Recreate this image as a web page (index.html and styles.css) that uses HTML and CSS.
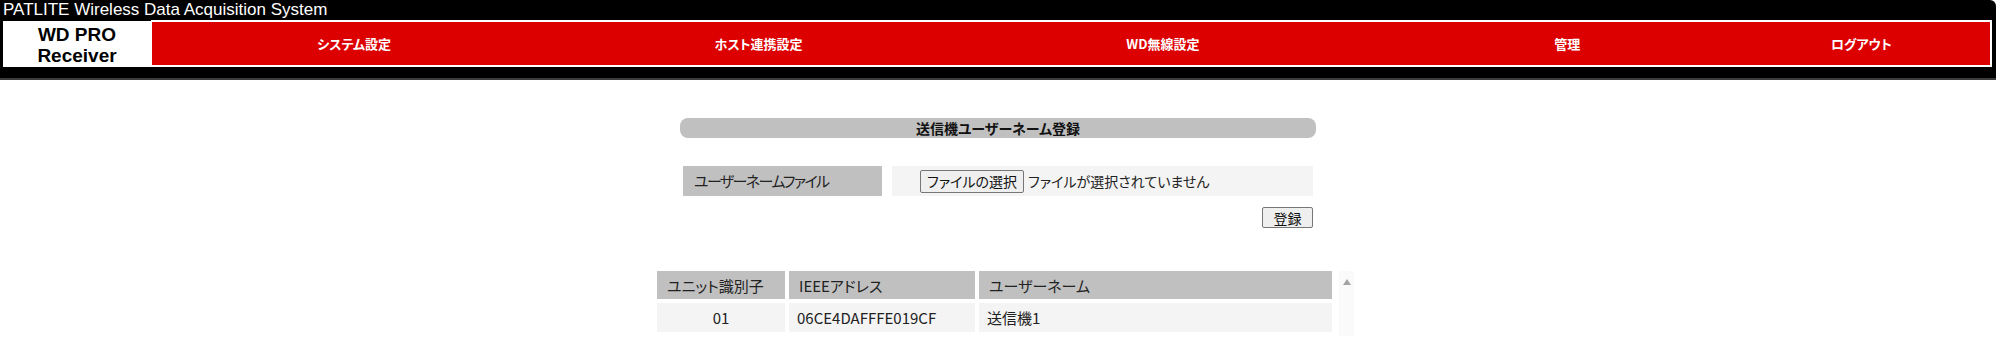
FILE: index.html
```html
<!DOCTYPE html>
<html lang="ja">
<head>
    <meta charset="UTF-8">
    <title>WD PRO Receiver</title>
    <link rel="stylesheet" href="styles.css">
</head>
<body>
    <header class="header">
        <div class="site-title">PATLITE Wireless Data Acquisition System</div>
        <div class="header-row">
            <div class="logo">WD PRO<br>Receiver</div>
            <nav class="nav">
                <a href="#">システム設定</a>
                <a href="#">ホスト連携設定</a>
                <a href="#">WD無線設定</a>
                <a href="#">管理</a>
                <a href="#">ログアウト</a>
            </nav>
        </div>
    </header>

    <main class="content">
        <div class="panel">
            <h1 class="panel-title">送信機ユーザーネーム登録</h1>

            <div class="form-row">
                <div class="form-label">ユーザーネームファイル</div>
                <div class="form-field">
                    <button type="button" class="file-button">ファイルの選択</button>
                    <span class="file-name">ファイルが選択されていません</span>
                </div>
            </div>

            <div class="form-actions">
                <button type="button" class="submit-button">登録</button>
            </div>
        </div>

        <div class="list-wrap">
            <table class="user-table">
                <colgroup>
                    <col class="col-id">
                    <col class="col-addr">
                    <col class="col-name">
                </colgroup>
                <thead>
                    <tr>
                        <th>ユニット識別子</th>
                        <th>IEEEアドレス</th>
                        <th>ユーザーネーム</th>
                    </tr>
                </thead>
                <tbody>
                    <tr>
                        <td class="cell-id">01</td>
                        <td>06CE4DAFFFE019CF</td>
                        <td>送信機1</td>
                    </tr>
                </tbody>
            </table>
            <div class="scrollbar"><span class="scroll-up"></span></div>
        </div>
    </main>
</body>
</html>
```

FILE: styles.css
```css
* {
    margin: 0;
    padding: 0;
    box-sizing: border-box;
}

body {
    font-family: "Noto Sans CJK JP", sans-serif;
    font-feature-settings: "palt";
    background: #ffffff;
    color: #222;
}

/* header */
.header {
    background: #000;
    height: 80px;
    border-bottom: 2px solid #3c3c3c;
    border-top-right-radius: 6px;
}

.site-title {
    font-family: "Liberation Sans", sans-serif;
    color: #fff;
    font-size: 17px;
    line-height: 20px;
    height: 20px;
    padding-left: 3px;
}

.header-row {
    display: flex;
    height: 47px;
    margin: 0 4px 0 3px;
}

.logo {
    width: 148px;
    margin-top: 1px;
    background: #fff;
    color: #000;
    font-family: "Liberation Sans", sans-serif;
    font-weight: 700;
    font-size: 19px;
    line-height: 21px;
    text-align: center;
    padding-top: 3px;
}

.nav {
    flex: 1;
    display: grid;
    grid-template-columns: 22% 22% 22% 22% 10%;
    align-items: center;
    background: #dd0000;
    border: 2px solid #fff;
    border-left-width: 1px;
}

.nav a {
    color: #fff;
    font-weight: 700;
    font-size: 13px;
    text-decoration: none;
    text-align: center;
}

/* register panel */
.content {
    padding-top: 38px;
}

.panel {
    width: 636px;
    margin: 0 auto;
}

.panel-title {
    background: #c0c0c0;
    border-radius: 8px;
    height: 20px;
    line-height: 20px;
    font-size: 14px;
    font-weight: 700;
    text-align: center;
    color: #111;
}

.form-row {
    display: grid;
    grid-template-columns: 199px 1fr;
    column-gap: 10px;
    margin: 28px 3px 0 3px;
    height: 30px;
}

.form-label {
    background: #c0c0c0;
    font-size: 15px;
    letter-spacing: -1.6px;
    line-height: 30px;
    padding-left: 11px;
}

.form-field {
    background: #f4f4f4;
    display: flex;
    align-items: center;
    padding-left: 28px;
    font-size: 14px;
}

.file-button,
.submit-button {
    font-family: "Noto Sans CJK JP", sans-serif;
    font-feature-settings: "palt";
    background: #efefef;
    border: 1px solid #767676;
    border-radius: 2px;
    color: #111;
    cursor: pointer;
}

.file-button {
    font-size: 14px;
    height: 23px;
    padding: 0 6px;
    margin-right: 4px;
}

.form-actions {
    display: flex;
    justify-content: flex-end;
    margin: 11px 3px 0 0;
}

.submit-button {
    font-size: 14px;
    width: 51px;
    height: 21px;
}

/* user list */
.list-wrap {
    display: flex;
    margin: 39px 0 0 calc(50% - 345px);
}

.user-table {
    border-spacing: 4px;
    font-size: 15px;
}

.col-id {
    width: 128px;
}

.col-addr {
    width: 186px;
}

.col-name {
    width: 353px;
}

.user-table th {
    background: #c0c0c0;
    font-weight: 400;
    text-align: left;
    height: 28px;
    padding-left: 10px;
}

.user-table td {
    background: #f4f4f4;
    height: 29px;
    padding-left: 8px;
}

.user-table .cell-id {
    text-align: center;
    padding-left: 0;
}

.scrollbar {
    width: 15px;
    margin: 4px 0 0 3px;
    background: #fafafa;
    display: flex;
    justify-content: center;
    padding-top: 8px;
}

.scroll-up {
    width: 0;
    height: 0;
    border-left: 4px solid transparent;
    border-right: 4px solid transparent;
    border-bottom: 6px solid #a3a3a3;
}
```
